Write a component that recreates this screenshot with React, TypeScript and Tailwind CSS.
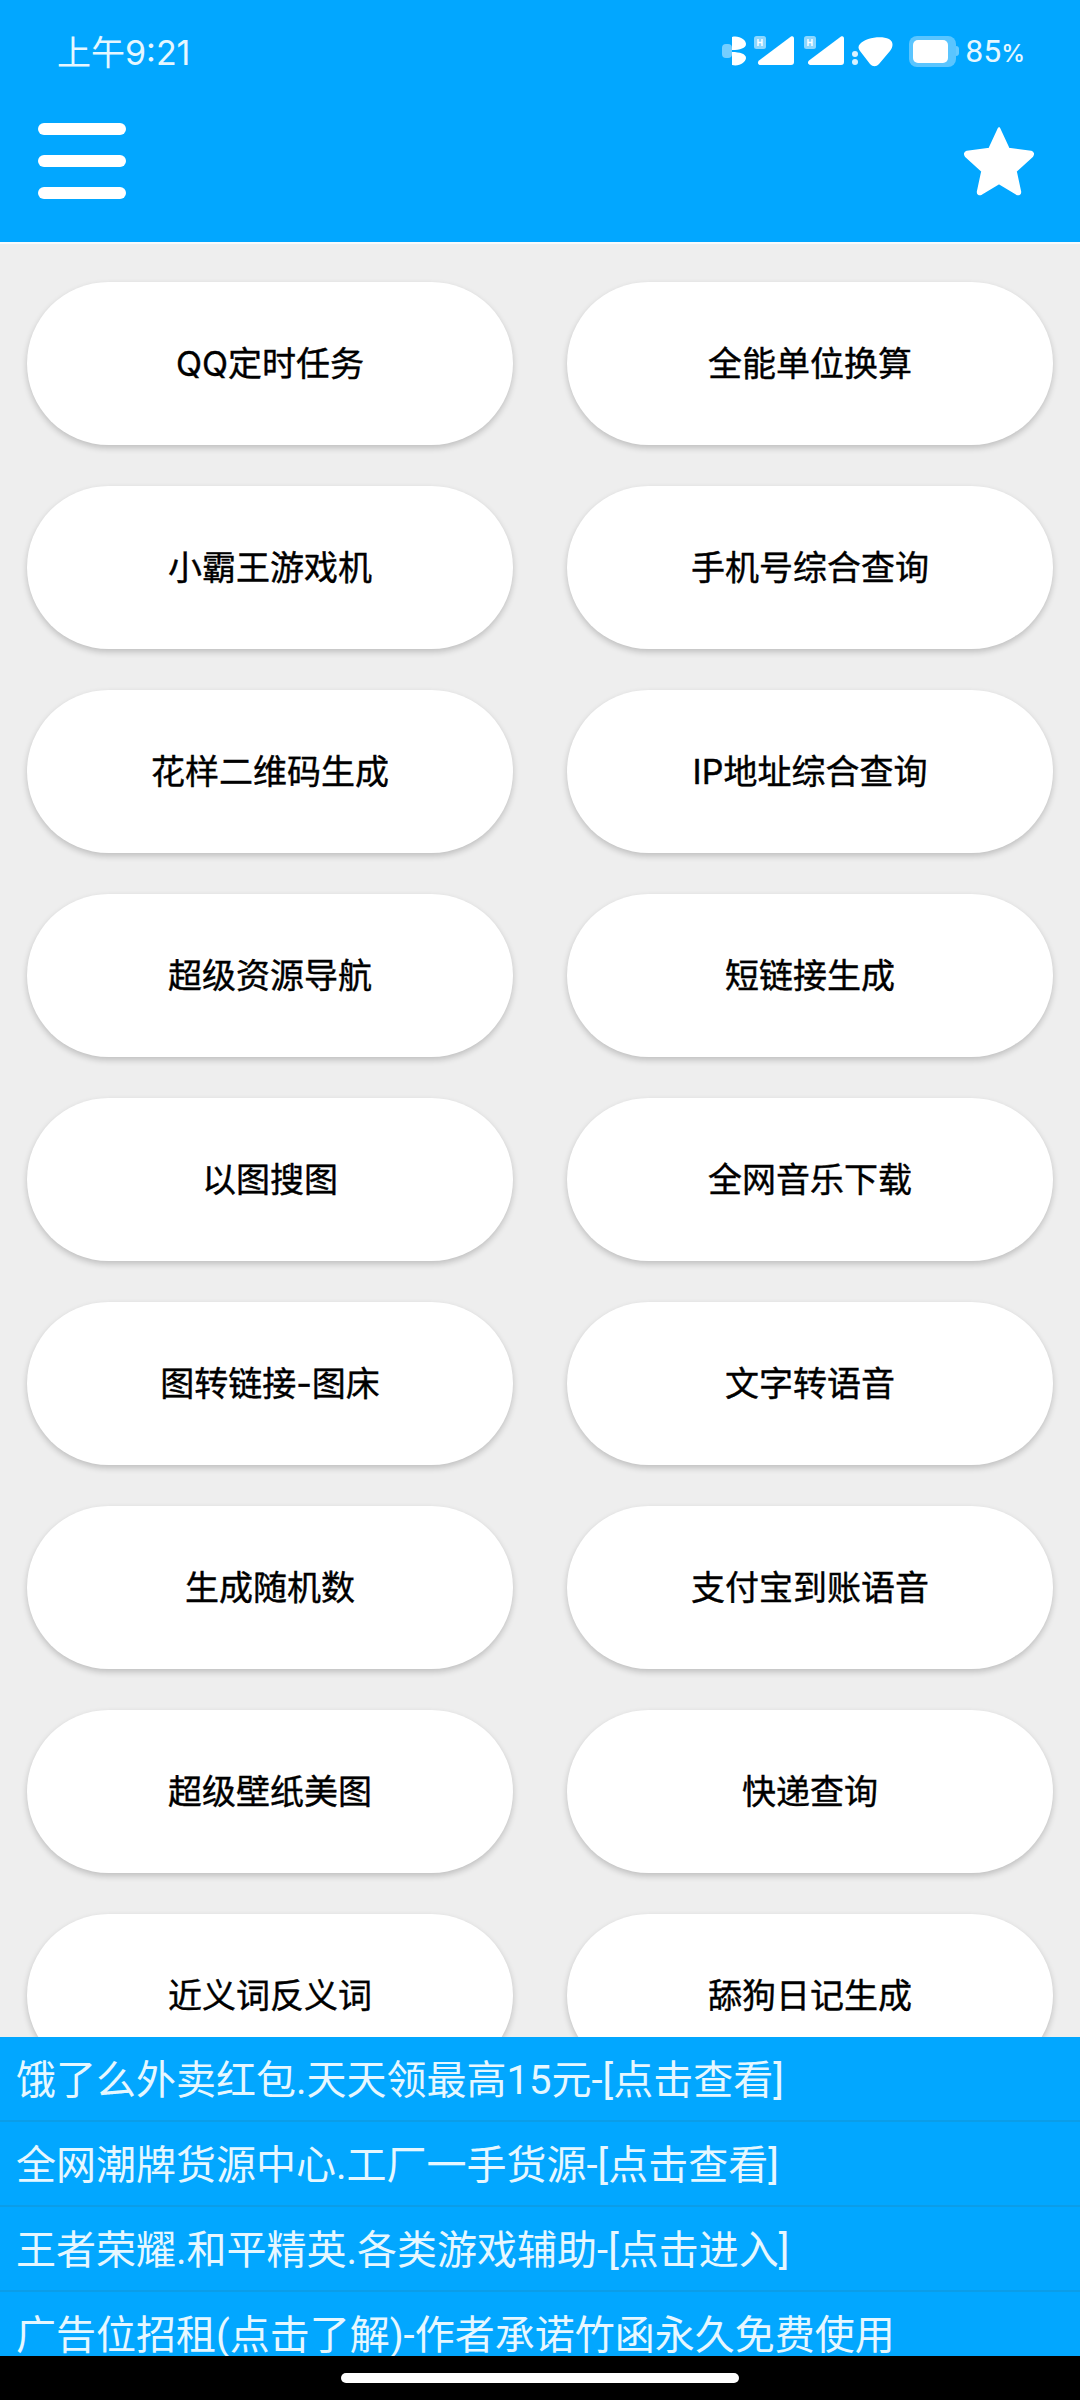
const tools = [
  ["QQ定时任务", "全能单位换算"],
  ["小霸王游戏机", "手机号综合查询"],
  ["花样二维码生成", "IP地址综合查询"],
  ["超级资源导航", "短链接生成"],
  ["以图搜图", "全网音乐下载"],
  ["图转链接-图床", "文字转语音"],
  ["生成随机数", "支付宝到账语音"],
  ["超级壁纸美图", "快递查询"],
  ["近义词反义词", "舔狗日记生成"],
]

const ads = [
  "饿了么外卖红包.天天领最高15元-[点击查看]",
  "全网潮牌货源中心.工厂一手货源-[点击查看]",
  "王者荣耀.和平精英.各类游戏辅助-[点击进入]",
  "广告位招租(点击了解)-作者承诺竹函永久免费使用",
]

function SignalIcon() {
  return (
    <svg width="40" height="32" viewBox="0 0 40 32" className="-ml-[3px]">
      <rect x="0" y="1" width="12" height="13" rx="2.5" fill="#ffffff" fillOpacity="0.55" />
      <path d="M4 4v7M8 4v7M4 7.5h4" stroke="#ffffff" strokeWidth="1.4" />
      <path d="M37 1.5 C39 0.5 40 2 40 3.5 V27 C40 29 39 30 37 30 H7 C4 30 3 27.5 5 25.5 Z" fill="#ffffff" />
    </svg>
  )
}

function StatusIcons() {
  return (
    <div className="flex items-center">
      {/* bluetooth, blurred the way the screenshot is */}
      <svg width="26" height="32" viewBox="0 0 26 32" className="mr-[9px]">
        <rect x="0" y="9" width="10" height="14" rx="4" fill="#ffffff" fillOpacity="0.45" />
        <path d="M10 2 C17 0 24 5 24 9 C24 13 18 15 10 15 Z" fill="#ffffff" />
        <path d="M10 17 C18 17 24 19 24 23 C24 27 17 32 10 30 Z" fill="#ffffff" />
      </svg>
      <SignalIcon />
      <div className="w-[13px]" />
      <SignalIcon />
      <svg width="46" height="32" viewBox="0 0 46 32" className="ml-[3px]">
        <circle cx="8" cy="19" r="3" fill="#ffffff" fillOpacity="0.85" />
        <circle cx="8" cy="27" r="3" fill="#ffffff" fillOpacity="0.85" />
        <path d="M13 9 C18 3 34 0 42 4 C47 7 46 12 43 16 L32 29 C29 32 26 32 23 29 L13 16 C11 13 11 11 13 9 Z" fill="#ffffff" />
      </svg>
      <div className="ml-[16px] flex items-center">
        <div className="flex h-[31px] w-[47px] items-center rounded-[8px] bg-white/35 pl-[4px]">
          <div className="h-[23px] w-[35px] rounded-[5px] bg-white" />
        </div>
        <div className="h-[10px] w-[3px] rounded-r-full bg-white/40" />
      </div>
      <div className="ml-[6px] flex items-baseline text-[#e6f7ff]">
        <span className="font-['Roboto',sans-serif] text-[32px] leading-none">85</span>
        <span className="font-['Inter',sans-serif] text-[24px] leading-none font-medium">%</span>
      </div>
    </div>
  )
}

export default function App() {
  return (
    <div className="flex h-[2400px] w-[1080px] flex-col overflow-hidden bg-[#eeeeee] font-['Inter','Noto_Sans_CJK_SC',sans-serif]">
      <header className="shrink-0 bg-[#02a7ff]">
        {/* Status bar */}
        <div className="flex h-[104px] items-start justify-between pt-[35px] pr-[55px] pl-[57px]">
          <span className="text-[34px] leading-[35px] text-[#e6f7ff]">上午9:21</span>
          <StatusIcons />
        </div>
        {/* Toolbar */}
        <div className="flex h-[138px] items-start justify-between pr-[45px] pl-[38px]">
          <div className="flex flex-col gap-[20px] pt-[19px]">
            <div className="h-[12px] w-[88px] rounded-full bg-white" />
            <div className="h-[12px] w-[88px] rounded-full bg-white" />
            <div className="h-[12px] w-[88px] rounded-full bg-white" />
          </div>
          <svg width="72" height="70" viewBox="0 0 72 70" className="mt-[22px]">
            <path
              d="M36 2.5 L45.5 23 L68 26 Q71 27 69 30 L52.5 45 L57 66 Q57 69 53.5 67.5 L36 57 L18.5 67.5 Q15 69 15 66 L19.5 45 L3 30 Q1 27 4 26 L26.5 23 Z"
              fill="#ffffff"
              stroke="#ffffff"
              strokeWidth="2.5"
              strokeLinejoin="round"
            />
          </svg>
        </div>
      </header>
      <div className="h-[2px] shrink-0 bg-[#f8fbfd]" />

      {/* Tool buttons */}
      <main className="flex min-h-0 flex-1 flex-col gap-[41px] overflow-hidden px-[27px] pt-[38px]">
        {tools.map((row) => (
          <div key={row[0]} className="grid shrink-0 grid-cols-2 gap-[54px]">
            {row.map((name) => (
              <div
                key={name}
                className="flex h-[163px] items-center justify-center rounded-full bg-white text-[34px] text-black shadow-[0_3px_6px_rgba(0,0,0,0.2)] [-webkit-text-stroke:0.4px_#000000]"
              >
                {name}
              </div>
            ))}
          </div>
        ))}
      </main>

      {/* Ad links */}
      <section className="h-[319px] shrink-0 overflow-hidden bg-[#02a7ff] font-['Roboto','Noto_Sans_CJK_SC',sans-serif]">
        {ads.map((ad) => (
          <div
            key={ad}
            className="flex h-[85px] items-center border-b-2 border-[#0b9de8] pt-[4px] pl-[16px] text-[40px] whitespace-nowrap text-[#e6f7ff]"
          >
            {ad}
          </div>
        ))}
      </section>

      {/* Navigation bar */}
      <div className="flex h-[44px] shrink-0 justify-center bg-black pt-[17px]">
        <div className="h-[10px] w-[398px] rounded-full bg-white" />
      </div>
    </div>
  )
}
